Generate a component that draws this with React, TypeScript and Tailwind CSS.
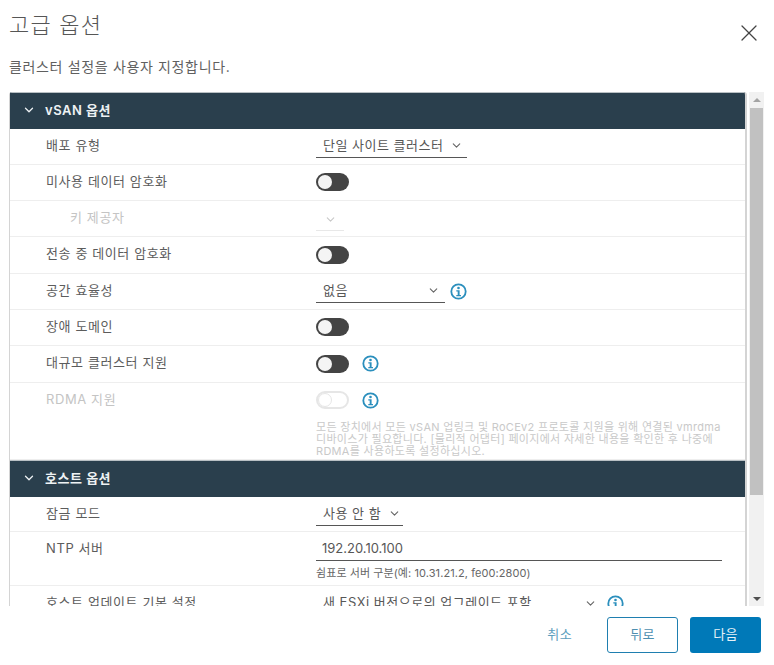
import { ChevronDown, X } from 'lucide-react';
import type { ReactNode } from 'react';

const Info = () => (
  <svg width="17" height="17" viewBox="0 0 17 17" className="shrink-0 text-[#2b8fbd]" fill="none">
    <circle cx="8.5" cy="8.5" r="7.2" stroke="currentColor" strokeWidth="1.8" />
    <circle cx="8.5" cy="5" r="1.3" fill="currentColor" />
    <path d="M6.3 7.2H9.6V11.9H11V13.2H6.3V11.9H7.7V8.5H6.3Z" fill="currentColor" />
  </svg>
);

const Toggle = ({ disabled = false }: { disabled?: boolean }) =>
  disabled ? (
    <div className="flex h-[18px] w-[33px] items-center rounded-full border-2 border-[#e6e6e6] bg-white">
      <div className="h-[14px] w-[14px] rounded-full border border-[#e6e6e6] bg-white" />
    </div>
  ) : (
    <div className="flex h-[18px] w-[33px] items-center rounded-full bg-[#444444] pl-[2px]">
      <div className="h-[14px] w-[14px] rounded-full bg-[#f4f4f4]" />
    </div>
  );

const Select = ({ label, width, justify = false }: { label: string; width: string; justify?: boolean }) => (
  <div className={`flex h-[23px] items-center gap-[7px] border-b border-[#565656] pl-[7px] pr-[5px] text-[13px] tracking-[0.5px] text-[#575757] ${width} ${justify ? 'justify-between' : ''}`}>
    <span className="whitespace-nowrap">{label}</span>
    <ChevronDown size={13} className="shrink-0 text-[#666666]" />
  </div>
);

const SectionHeader = ({ title }: { title: string }) => (
  <div className="flex h-[36.5px] shrink-0 items-center gap-[9px] border-t border-[#b9c0c4] bg-[#2a3f4d] pb-[1px] pl-[12px] text-[13px] font-semibold tracking-[0.5px] text-[#eef2f4]">
    <ChevronDown size={14} strokeWidth={2.2} />
    <span>{title}</span>
  </div>
);

const Row = ({ label, children, muted = false, indent = false, h = 'h-[36.3px]' }: { label: string; children?: ReactNode; muted?: boolean; indent?: boolean; h?: string }) => (
  <div className={`flex shrink-0 border-b border-[#eeeeee] ${h}`}>
    <div className={`w-[306px] shrink-0 pt-[7px] text-[13px] leading-[19px] tracking-[0.6px] ${indent ? 'pl-[60px]' : 'pl-[36px]'} ${muted ? 'text-[#c4c4c4]' : 'text-[#5c5c5c]'}`}>
      {label}
    </div>
    <div className="min-w-0 flex-1">{children}</div>
  </div>
);

const Line = ({ children }: { children: ReactNode }) => (
  <div className="flex h-[35px] items-center gap-[13px]">{children}</div>
);

export default function App() {
  return (
    <div className="flex h-[665px] w-[774px] flex-col overflow-hidden bg-white font-['Inter','Noto_Sans_CJK_KR',sans-serif]">
      <div className="flex h-[92px] shrink-0 flex-col px-[9px]">
        <div className="flex h-[41px] items-start justify-between pr-[2px]">
          <h1 className="mt-[9px] text-[22px] leading-[32px] font-light tracking-[1.2px] text-[#565656]">고급 옵션</h1>
          <X size={28} strokeWidth={1.1} className="mt-[19px] shrink-0 text-[#444444]" />
        </div>
        <p className="mt-[16px] text-[14px] leading-[20px] tracking-[0.65px] text-[#5f5f5f]">클러스터 설정을 사용자 지정합니다.</p>
      </div>

      <div className="flex h-[514px] shrink-0 pl-[9px] pr-[11px]">
        <div className="flex w-[738px] shrink-0 flex-col overflow-hidden rounded-t-[3px] border-r-2 border-[#d4d4d4]">
          <div className="flex flex-col border-l border-[#d4d4d4]">
            <SectionHeader title="vSAN 옵션" />
            <Row label="배포 유형">
              <div className="pt-[6px]">
                <Select label="단일 사이트 클러스터" width="w-[151px]" />
              </div>
            </Row>
            <Row label="미사용 데이터 암호화">
              <Line><Toggle /></Line>
            </Row>
            <Row label="키 제공자" muted indent>
              <div className="pt-[7px]">
                <div className="flex h-[23px] w-[28px] items-center justify-center border-b border-[#e8e8e8] text-[#c8c8c8]">
                  <ChevronDown size={13} />
                </div>
              </div>
            </Row>
            <Row label="전송 중 데이터 암호화">
              <Line><Toggle /></Line>
            </Row>
            <Row label="공간 효율성">
              <div className="flex items-center gap-[5px] pt-[6px]">
                <Select label="없음" width="w-[129px]" justify />
                <Info />
              </div>
            </Row>
            <Row label="장애 도메인">
              <Line><Toggle /></Line>
            </Row>
            <Row label="대규모 클러스터 지원">
              <Line><Toggle /><Info /></Line>
            </Row>
            <Row label="RDMA 지원" muted h="h-[77.5px]">
              <Line><Toggle disabled /><Info /></Line>
              <p className="mt-[3px] w-[408px] text-[11px] leading-[12px] tracking-[0.3px] text-[#c9c9c9]">
                모든 장치에서 모든 vSAN 업링크 및 RoCEv2 프로토콜 지원을 위해 연결된 vmrdma 디바이스가 필요합니다. [물리적 어댑터] 페이지에서 자세한 내용을 확인한 후 나중에 RDMA를 사용하도록 설정하십시오.
              </p>
            </Row>
            <SectionHeader title="호스트 옵션" />
            <Row label="잠금 모드" h="h-[35.5px]">
              <div className="pt-[6px]">
                <Select label="사용 안 함" width="w-[87px]" />
              </div>
            </Row>
            <Row label="NTP 서버" h="h-[54px]">
              <div className="flex h-[29px] w-[406px] items-center border-b border-[#565656] pl-[6px] pt-[6px] text-[13px] text-[#575757]">
                192.20.10.100
              </div>
              <p className="mt-[5px] text-[11px] leading-[14px] tracking-[0.08px] text-[#666666]">쉼표로 서버 구분(예: 10.31.21.2, fe00:2800)</p>
            </Row>
            <Row label="호스트 업데이트 기본 설정">
              <div className="flex items-center gap-[5px] pt-[6px]">
                <Select label="새 ESXi 버전으로의 업그레이드 포함" width="w-[286px]" justify />
                <Info />
              </div>
            </Row>
          </div>
        </div>

        <div className="ml-[2px] flex w-[15px] shrink-0 flex-col items-center bg-[#f1f1f1]">
          <div className="flex h-[16px] shrink-0 items-center justify-center">
            <div className="h-0 w-0 border-x-[4px] border-b-[4px] border-x-transparent border-b-[#a3a3a3]" />
          </div>
          <div className="h-[387px] w-[13px] shrink-0 bg-[#c1c1c1]" />
          <div className="flex-1" />
          <div className="flex h-[15px] shrink-0 items-center justify-center">
            <div className="h-0 w-0 border-x-[4px] border-t-[4px] border-x-transparent border-t-[#505050]" />
          </div>
        </div>
      </div>

      <div className="flex flex-1 items-start justify-end gap-[12px] pr-[13px] pt-[11px] text-[13px]">
        <button className="mr-[21px] h-[36px] px-[2px] tracking-[0.4px] text-[#5d9dbd]">취소</button>
        <button className="h-[36px] w-[71px] rounded-[3px] border border-[#1f7fb0] tracking-[0.4px] text-[#4d8fb0]">뒤로</button>
        <button className="h-[36px] w-[71px] rounded-[3px] bg-[#0079b8] tracking-[0.4px] text-[#e8f2f7]">다음</button>
      </div>
    </div>
  );
}
